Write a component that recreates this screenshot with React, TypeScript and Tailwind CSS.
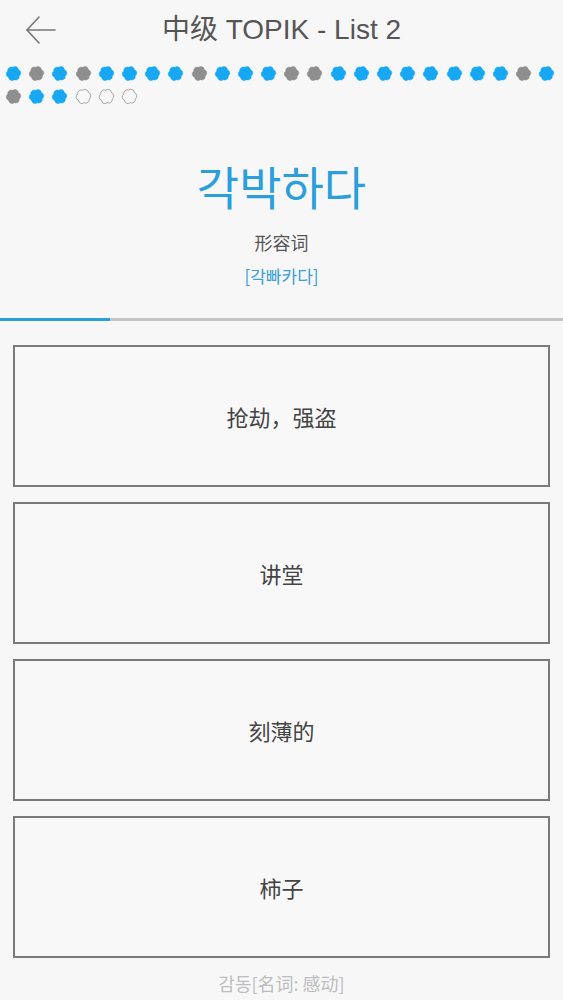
type Mark = 'right' | 'wrong' | 'todo'

// answer history for this list, two rows of blobs
const marks: Mark[] = [
  'right', 'wrong', 'right', 'wrong', 'right', 'right', 'right', 'right',
  'wrong', 'right', 'right', 'right', 'wrong', 'wrong', 'right', 'right',
  'right', 'right', 'right', 'right', 'right', 'right', 'wrong', 'right',
  'wrong', 'right', 'right', 'todo', 'todo', 'todo',
]

const choices = ['抢劫，强盗', '讲堂', '刻薄的', '柿子']

// lumpy cloud outline: a few bumps round a circle
function blobPath(n: number) {
  const cx = 8
  const cy = 8
  const r = 5.9
  const pts = Array.from({ length: n }, (_, i) => {
    const a = (i * 2 * Math.PI) / n + 0.4
    return [cx + r * Math.cos(a), cy + r * Math.sin(a)]
  })
  let d = `M${pts[0][0].toFixed(2)} ${pts[0][1].toFixed(2)}`
  for (let i = 1; i <= n; i++) {
    const p = pts[i % n]
    d += ` A3.3 3.3 0 0 1 ${p[0].toFixed(2)} ${p[1].toFixed(2)}`
  }
  return d + 'Z'
}

const BLOB = blobPath(6)

function Blob({ mark }: { mark: Mark }) {
  const fill = mark === 'right' ? '#16a8f2' : mark === 'wrong' ? '#8e8e8e' : 'none'
  const stroke = mark === 'todo' ? '#9a9a9a' : fill
  return (
    <svg width="17" height="17" viewBox="0 0 16 16" className="shrink-0">
      <path d={BLOB} fill={fill} stroke={stroke} strokeWidth={mark === 'todo' ? 0.8 : 0.4} />
    </svg>
  )
}

function BackArrow() {
  return (
    <svg width="34" height="30" viewBox="0 0 34 30" fill="none" stroke="#777" strokeWidth="1.6" strokeLinecap="round">
      <path d="M3 15H31" />
      <path d="M15 2L3 15L15 28" />
    </svg>
  )
}

export default function App() {
  return (
    <div className="w-[563px] h-[1000px] overflow-hidden bg-[#f7f7f8] font-['Liberation_Sans','Noto_Sans_CJK_SC',sans-serif]">
      {/* Top bar */}
      <div className="relative flex items-center justify-center h-[60px]">
        <div className="absolute left-[24px] top-[15px]">
          <BackArrow />
        </div>
        <h1 className="text-[28px] text-[#555]">中级 TOPIK - List 2</h1>
      </div>

      {/* Progress blobs */}
      <div className="flex flex-wrap gap-x-[6.2px] gap-y-[6px] pl-[5px] pr-[4px] pt-[5px]">
        {marks.map((m, i) => (
          <Blob key={i} mark={m} />
        ))}
      </div>

      {/* Word */}
      <div className="flex flex-col items-center pt-[52px] font-['Noto_Sans_CJK_SC',sans-serif]">
        <div className="text-[46px] leading-[56px] text-[#2a9fdb] font-['Noto_Sans_CJK_KR',sans-serif]">각박하다</div>
        <div className="mt-[17px] text-[18px] leading-[24px] text-[#555]">形容词</div>
        <div className="mt-[10px] text-[17px] leading-[24px] text-[#3a9fd2] font-['Noto_Sans_CJK_KR',sans-serif]">[각빠카다]</div>
      </div>

      {/* Timer line */}
      <div className="mt-[30px] h-[3px] bg-[#c4c4c4]">
        <div className="h-full w-[110px] bg-[#2a9fdb]" />
      </div>

      {/* Choices */}
      <div className="flex flex-col gap-[15px] px-[13px] pt-[24px] font-['Noto_Sans_CJK_SC',sans-serif]">
        {choices.map((c) => (
          <button
            key={c}
            className="h-[142px] flex items-center justify-center border-2 border-[#7a7a7a] bg-[#f8f8f9] text-[22px] text-[#444]"
          >
            {c}
          </button>
        ))}
      </div>

      <div className="mt-[12px] text-center text-[18px] leading-[26px] text-[#bdbdbd] font-['Noto_Sans_CJK_SC',sans-serif]">
        <span className="font-['Noto_Sans_CJK_KR',sans-serif]">감동</span>[名词: 感动]
      </div>
    </div>
  )
}
